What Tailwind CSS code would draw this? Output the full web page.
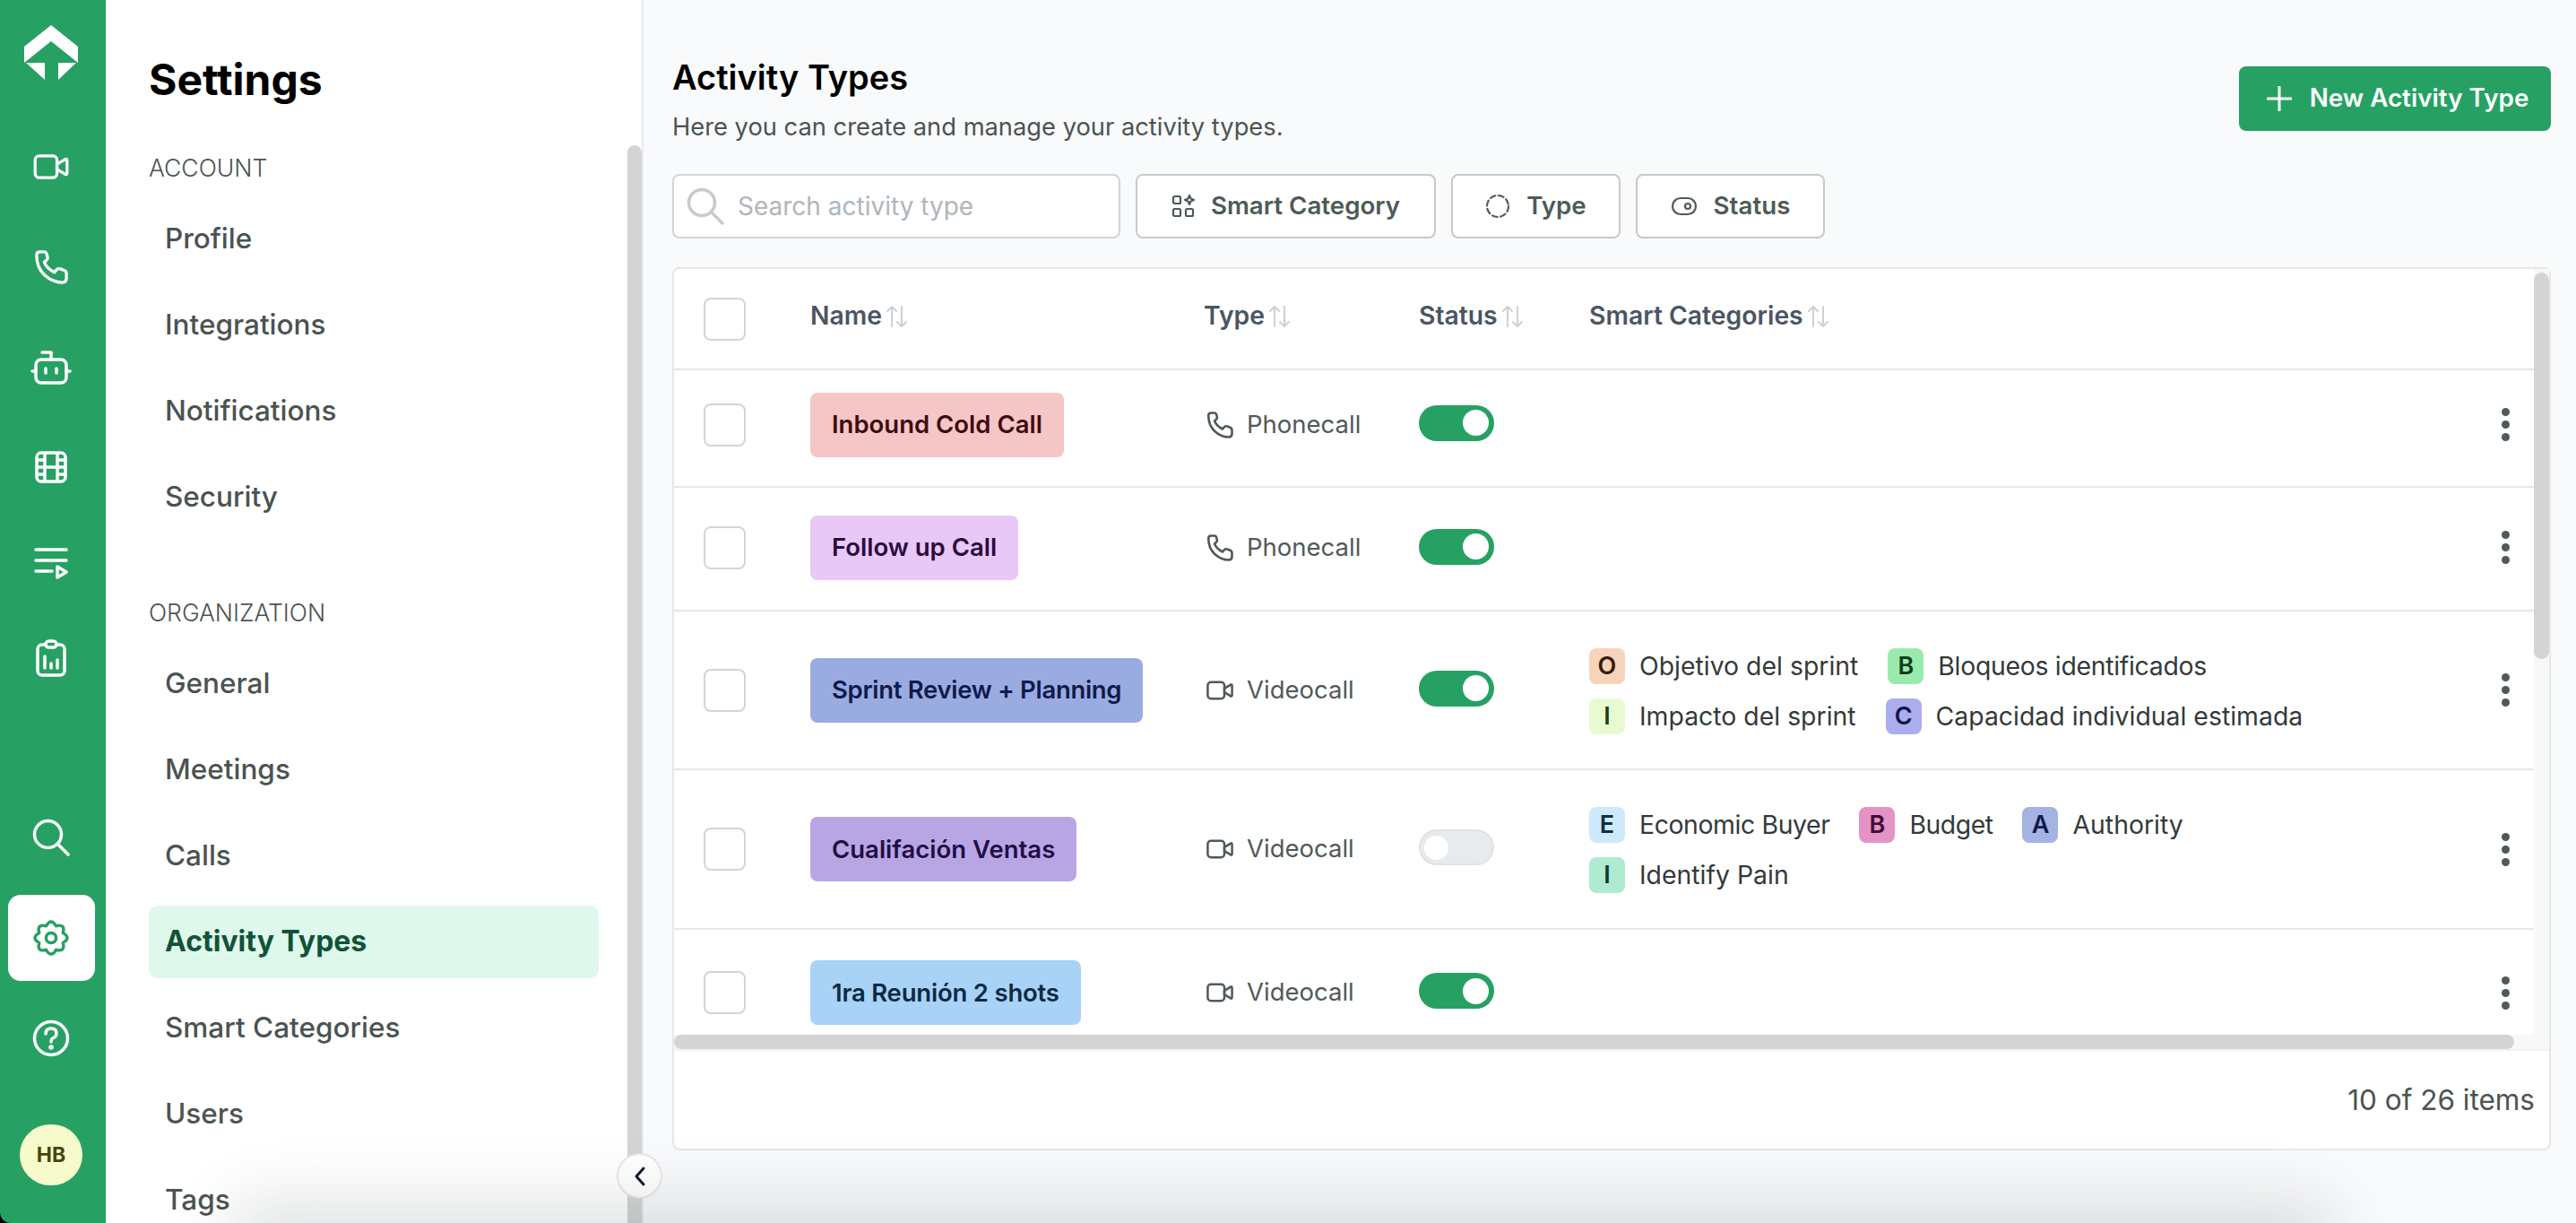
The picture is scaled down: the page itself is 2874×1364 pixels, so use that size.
<!DOCTYPE html>
<html lang="en">
<head>
  <meta charset="UTF-8"/>
  <title>Activity Types</title>
  <script src="https://cdn.jsdelivr.net/npm/@tailwindcss/browser@4"></script>
</head>
<body class="bg-[#f9fafb] font-['Inter',sans-serif] text-[#4b5563]">
<div class="relative flex h-[1364px] w-[2874px] overflow-hidden bg-black">

  <!-- Icon rail -->
  <aside class="flex w-[118px] shrink-0 flex-col items-center rounded-bl-[12px] bg-[#26a163] pr-[4px] text-white">
    <div class="flex h-[130px] items-start pt-[28px]">
      <svg width="60" height="61" viewBox="0 0 60 61" fill="currentColor"><path d="M30 0 60 24V42L30 18 0 42V24Z"/><path d="M2 42H23V61ZM58 42H38V61Z"/></svg>
    </div>
    <div class="flex h-[112px] items-center">
      <svg width="40" height="30" viewBox="0 0 42 32" fill="none" stroke="currentColor" stroke-width="3.5" stroke-linejoin="round"><rect x="2" y="3" width="26" height="26" rx="5"/><path d="M28 13 38 7Q40 6 40 9V23Q40 26 38 25L28 19Z"/></svg>
    </div>
    <div class="flex h-[112px] items-center">
      <svg width="38" height="38" viewBox="0 0 40 40" fill="none" stroke="currentColor" stroke-width="3.5" stroke-linejoin="round"><path d="M3 6Q3 2 7 2H12Q14 2 15 5L16 9Q16 11 12 14C14 19 18 23 24 26 27 22 28 21 31 22L36 24Q38 25 38 28V33Q38 38 33 38 22 38 12 29 3 20 3 6Z"/></svg>
    </div>
    <div class="flex h-[112px] items-center">
      <svg width="46" height="38" viewBox="0 0 46 38" fill="none" stroke="currentColor" stroke-width="3.5" stroke-linecap="round" stroke-linejoin="round"><rect x="6" y="10" width="34" height="26" rx="6"/><path d="M13 2H23V10M2 23H6M40 23H44M17 20V25M29 20V25"/></svg>
    </div>
    <div class="flex h-[110px] items-center">
      <svg width="36" height="36" viewBox="0 0 36 36" fill="none" stroke="currentColor" stroke-width="3.5"><rect x="2" y="2" width="32" height="32" rx="5"/><path d="M11 2V34M25 2V34M11 18H25M2 10H11M2 18H11M2 26H11M25 10H34M25 18H34M25 26H34"/></svg>
    </div>
    <div class="flex h-[104px] items-center">
      <svg width="38" height="36" viewBox="0 0 38 36" fill="none" stroke="currentColor" stroke-width="3.5" stroke-linecap="round" stroke-linejoin="round"><path d="M2 3H36M2 15H36M2 27H20M26 22 36 28 26 34Z"/></svg>
    </div>
    <div class="flex h-[108px] items-center">
      <svg width="34" height="42" viewBox="0 0 34 42" fill="none" stroke="currentColor" stroke-width="3.5" stroke-linecap="round" stroke-linejoin="round"><rect x="2" y="6" width="30" height="34" rx="5"/><rect x="11" y="2" width="12" height="7" rx="3.5" fill="#26a163"/><path d="M10 19V32M17 27V32M24 23V32"/></svg>
    </div>

    <div class="mt-auto flex h-[112px] items-center pb-[16px]">
      <svg width="42" height="42" viewBox="0 0 42 42" fill="none" stroke="currentColor" stroke-width="3.5" stroke-linecap="round"><circle cx="17.5" cy="17.5" r="15"/><path d="M28 28 40 40"/></svg>
    </div>
    <div class="flex h-[96px] w-[97px] items-center justify-center rounded-[14px] bg-white text-[#26a163]">
      <svg width="42" height="42" viewBox="0 0 24 24" fill="none" stroke="currentColor" stroke-width="2" stroke-linejoin="round"><circle cx="12" cy="12" r="3.2"/><path d="M19.58 8.86Q25 12 19.58 15.14 21.19 21.19 15.14 19.58 12 25 8.86 19.58 2.81 21.19 4.42 15.14-1 12 4.42 8.86 2.81 2.81 8.86 4.42 12-1 15.14 4.42 21.19 2.81 19.58 8.86Z"/></svg>
    </div>
    <div class="flex h-[128px] items-center">
      <svg width="42" height="42" viewBox="0 0 42 42" fill="none" stroke="currentColor" stroke-width="3.5" stroke-linecap="round"><circle cx="21" cy="21" r="18.5"/><path d="M15 16Q15 10 21 10 27 10 27 15.5 27 19 23.5 20.5 21 21.5 21 25"/><circle cx="21" cy="31" r="1" fill="currentColor"/></svg>
    </div>
    <div class="mt-[32px] mb-[42px] flex h-[68px] w-[70px] items-center justify-center rounded-full bg-[#f7fbcb] text-[23px] font-bold text-[#45460f]">HB</div>
  </aside>

  <!-- Settings menu -->
  <nav class="w-[600px] shrink-0 border-r-2 border-[#e8eaed] bg-white pl-[48px] text-[#4b5352]">
    <h1 class="pt-[59px] text-[48px] leading-[60px] font-bold text-black">Settings</h1>
    <p class="mt-[53px] text-[26.5px] leading-[30px] font-light">ACCOUNT</p>
    <ul class="mt-[24px] w-[502px] text-[31.5px] font-medium">
      <li class="mb-[15px] flex h-[81px] items-center pb-[2px] pl-[18px]">Profile</li>
      <li class="mb-[15px] flex h-[81px] items-center pb-[2px] pl-[18px]">Integrations</li>
      <li class="mb-[15px] flex h-[81px] items-center pb-[2px] pl-[18px]">Notifications</li>
      <li class="flex h-[81px] items-center pb-[2px] pl-[18px]">Security</li>
    </ul>
    <p class="mt-[73px] text-[26.5px] leading-[30px] font-light">ORGANIZATION</p>
    <ul class="mt-[24px] w-[502px] text-[31.5px] font-medium">
      <li class="mb-[15px] flex h-[81px] items-center pb-[2px] pl-[18px]">General</li>
      <li class="mb-[15px] flex h-[81px] items-center pb-[2px] pl-[18px]">Meetings</li>
      <li class="mb-[15px] flex h-[81px] items-center pb-[2px] pl-[18px]">Calls</li>
      <li class="mb-[15px] flex h-[81px] items-center rounded-[10px] bg-[#def9eb] pb-[2px] pl-[18px] text-[32px] font-bold text-[#125238]">Activity Types</li>
      <li class="mb-[15px] flex h-[81px] items-center pb-[2px] pl-[18px]">Smart Categories</li>
      <li class="mb-[15px] flex h-[81px] items-center pb-[2px] pl-[18px]">Users</li>
      <li class="flex h-[81px] items-center pb-[2px] pl-[18px]">Tags</li>
    </ul>
  </nav>

  <!-- Main content -->
  <main class="flex min-w-0 flex-1 flex-col bg-[#f9fafb] pt-[64px] pr-[28px] pl-[32px]">
    <header class="flex items-start justify-between">
      <div>
        <h2 class="text-[38px] leading-[44px] font-semibold text-black">Activity Types</h2>
        <p class="mt-[14px] text-[27.3px] leading-[40px] text-[#4b5352]">Here you can create and manage your activity types.</p>
      </div>
      <button class="mt-[10px] flex h-[72px] w-[348px] items-center justify-center gap-[20px] rounded-[8px] bg-[#26a163] pl-[6px] text-[27.8px] font-semibold text-white">
        <svg width="28" height="28" viewBox="0 0 28 28" fill="none" stroke="currentColor" stroke-width="3" stroke-linecap="round"><path d="M14 1V27M1 14H27"/></svg>
        New Activity Type
      </button>
    </header>

    <div class="mt-[32px] flex gap-[17px]">
      <label class="flex h-[72px] w-[500px] items-center gap-[15px] rounded-[8px] border-2 border-[#d1d5db] bg-white pl-[14px]">
        <svg width="42" height="42" viewBox="0 0 42 42" fill="none" stroke="#c5ccc9" stroke-width="3.5" stroke-linecap="round"><circle cx="17" cy="17" r="14.5"/><path d="M28 28 40 40"/></svg>
        <span class="text-[28px] text-[#aeb6bd]">Search activity type</span>
      </label>
      <button class="flex h-[72px] w-[335px] items-center justify-center gap-[18px] rounded-[8px] border-2 border-[#c6cac9] bg-white text-[27.7px] font-semibold text-[#4f5a58]">
        <svg width="26" height="26" viewBox="0 0 26 26" fill="none" stroke="currentColor" stroke-width="2.2" stroke-linejoin="round"><rect x="2" y="2" width="8" height="8" rx="1.5"/><rect x="2" y="16" width="8" height="8" rx="1.5"/><rect x="16" y="16" width="8" height="8" rx="1.5"/><path d="M20 1 21.5 4.5 25 6 21.5 7.5 20 11 18.5 7.5 15 6 18.5 4.5Z"/></svg>
        Smart Category
      </button>
      <button class="flex h-[72px] w-[189px] items-center justify-center gap-[18px] rounded-[8px] border-2 border-[#c6cac9] bg-white text-[27.7px] font-semibold text-[#4f5a58]">
        <svg width="28" height="28" viewBox="0 0 28 28" fill="none" stroke="currentColor" stroke-width="2.2" stroke-dasharray="6 3.5" stroke-linecap="round"><circle cx="14" cy="14" r="12"/></svg>
        Type
      </button>
      <button class="flex h-[72px] w-[211px] items-center justify-center gap-[18px] rounded-[8px] border-2 border-[#c6cac9] bg-white text-[27.7px] font-semibold text-[#4f5a58]">
        <svg width="30" height="24" viewBox="0 0 30 24" fill="none" stroke="currentColor" stroke-width="2.2"><rect x="2" y="3" width="26" height="18" rx="9"/><circle cx="19" cy="12" r="3"/></svg>
        Status
      </button>
    </div>

    <section class="mt-[32px] flex h-[985px] flex-col rounded-[8px] border-2 border-[#e5e7eb] bg-white">
      <div class="flex h-[854px] shrink-0 overflow-hidden">
        <div class="min-w-0 flex-1 overflow-hidden">
          <!-- Head row -->
          <div class="flex h-[113px] items-center border-b-2 border-[#e5e7eb] text-[28.3px] font-semibold text-[#4b5563]">
            <span class="ml-[33px] h-[48px] w-[47px] rounded-[8px] border-2 border-[#d1d5db]"></span>
            <span class="mb-[6px] ml-[72px] flex w-[439px] items-center gap-[2px]">Name
              <svg width="28" height="28" viewBox="0 0 28 28" fill="none" stroke="#cdd1d5" stroke-width="2" stroke-linecap="round" stroke-linejoin="round"><path d="M9 25V3M4 8 9 3 14 8M20 3V25M15 20 20 25 25 20"/></svg>
            </span>
            <span class="mb-[6px] flex w-[240px] items-center gap-[2px]">Type
              <svg width="28" height="28" viewBox="0 0 28 28" fill="none" stroke="#cdd1d5" stroke-width="2" stroke-linecap="round" stroke-linejoin="round"><path d="M9 25V3M4 8 9 3 14 8M20 3V25M15 20 20 25 25 20"/></svg>
            </span>
            <span class="mb-[6px] flex w-[190px] items-center gap-[2px]">Status
              <svg width="28" height="28" viewBox="0 0 28 28" fill="none" stroke="#cdd1d5" stroke-width="2" stroke-linecap="round" stroke-linejoin="round"><path d="M9 25V3M4 8 9 3 14 8M20 3V25M15 20 20 25 25 20"/></svg>
            </span>
            <span class="mb-[6px] flex items-center gap-[2px]">Smart Categories
              <svg width="28" height="28" viewBox="0 0 28 28" fill="none" stroke="#cdd1d5" stroke-width="2" stroke-linecap="round" stroke-linejoin="round"><path d="M9 25V3M4 8 9 3 14 8M20 3V25M15 20 20 25 25 20"/></svg>
            </span>
          </div>

          <!-- Row 1 -->
          <div class="flex h-[131px] items-center border-b-2 border-[#e5e7eb] pb-[8px]">
            <span class="ml-[33px] h-[48px] w-[47px] rounded-[8px] border-2 border-[#d1d5db]"></span>
            <span class="ml-[72px] w-[439px]"><span class="inline-flex h-[72px] items-center rounded-[8px] bg-[#f5c6c6] px-[24px] pt-[1px] text-[27.5px] font-semibold text-[#3f0b10]">Inbound Cold Call</span></span>
            <span class="flex w-[240px] items-center gap-[15px] pl-[3px] text-[27.5px] text-[#4f5a58]">
              <svg width="30" height="30" viewBox="0 0 40 40" fill="none" stroke="currentColor" stroke-width="3.5" stroke-linejoin="round"><path d="M3 6Q3 2 7 2H12Q14 2 15 5L16 9Q16 11 12 14C14 19 18 23 24 26 27 22 28 21 31 22L36 24Q38 25 38 28V33Q38 38 33 38 22 38 12 29 3 20 3 6Z"/></svg>
              Phonecall
            </span>
            <span class="mb-[4px] flex w-[190px]"><span class="flex h-[40px] w-[84px] items-center justify-end rounded-full bg-[#26a163] pr-[6px]"><span class="h-[29px] w-[29px] rounded-full bg-white"></span></span></span>
            <span class="mr-[27px] ml-auto flex flex-col gap-[5px]"><i class="h-[9px] w-[9px] rounded-full bg-[#4f5a58]"></i><i class="h-[9px] w-[9px] rounded-full bg-[#4f5a58]"></i><i class="h-[9px] w-[9px] rounded-full bg-[#4f5a58]"></i></span>
          </div>

          <!-- Row 2 -->
          <div class="flex h-[138px] items-center border-b-2 border-[#e5e7eb] pb-[3px]">
            <span class="ml-[33px] h-[48px] w-[47px] rounded-[8px] border-2 border-[#d1d5db]"></span>
            <span class="ml-[72px] w-[439px]"><span class="inline-flex h-[72px] items-center rounded-[8px] bg-[#e8c8f6] px-[24px] pt-[1px] text-[27.5px] font-semibold text-[#2a0b3d]">Follow up Call</span></span>
            <span class="flex w-[240px] items-center gap-[15px] pl-[3px] text-[27.5px] text-[#4f5a58]">
              <svg width="30" height="30" viewBox="0 0 40 40" fill="none" stroke="currentColor" stroke-width="3.5" stroke-linejoin="round"><path d="M3 6Q3 2 7 2H12Q14 2 15 5L16 9Q16 11 12 14C14 19 18 23 24 26 27 22 28 21 31 22L36 24Q38 25 38 28V33Q38 38 33 38 22 38 12 29 3 20 3 6Z"/></svg>
              Phonecall
            </span>
            <span class="mb-[2px] flex w-[190px]"><span class="flex h-[40px] w-[84px] items-center justify-end rounded-full bg-[#26a163] pr-[6px]"><span class="h-[29px] w-[29px] rounded-full bg-white"></span></span></span>
            <span class="mr-[27px] ml-auto flex flex-col gap-[5px]"><i class="h-[9px] w-[9px] rounded-full bg-[#4f5a58]"></i><i class="h-[9px] w-[9px] rounded-full bg-[#4f5a58]"></i><i class="h-[9px] w-[9px] rounded-full bg-[#4f5a58]"></i></span>
          </div>

          <!-- Row 3 -->
          <div class="flex h-[177px] items-center border-b-2 border-[#e5e7eb]">
            <span class="ml-[33px] h-[48px] w-[47px] rounded-[8px] border-2 border-[#d1d5db]"></span>
            <span class="ml-[72px] w-[439px]"><span class="inline-flex h-[72px] items-center rounded-[8px] bg-[#9aabe2] px-[24px] pt-[1px] text-[27.5px] font-semibold tracking-[-0.3px] text-[#111a4a]">Sprint Review + Planning</span></span>
            <span class="flex w-[240px] items-center gap-[15px] pl-[3px] text-[27.5px] text-[#4f5a58]">
              <svg width="30" height="28" viewBox="0 0 42 32" fill="none" stroke="currentColor" stroke-width="3.5" stroke-linejoin="round"><rect x="2" y="3" width="26" height="26" rx="5"/><path d="M28 13 38 7Q40 6 40 9V23Q40 26 38 25L28 19Z"/></svg>
              Videocall
            </span>
            <span class="mb-[4px] flex w-[190px]"><span class="flex h-[40px] w-[84px] items-center justify-end rounded-full bg-[#26a163] pr-[6px]"><span class="h-[29px] w-[29px] rounded-full bg-white"></span></span></span>
            <div class="flex flex-col gap-[16px] pt-[2px] text-[28.4px] leading-[40px] text-[#333a39]">
              <div class="flex items-center">
                <b class="flex h-[40px] w-[40px] items-center justify-center rounded-[8px] bg-[#f5d4bb] text-[27px] font-semibold text-[#3a1a05]">O</b><span class="ml-[16px]">Objetivo del sprint</span>
                <b class="ml-[33px] flex h-[40px] w-[40px] items-center justify-center rounded-[8px] bg-[#9aeaae] text-[27px] font-semibold text-[#0f3d1e]">B</b><span class="ml-[16px] tracking-[-0.3px]">Bloqueos identificados</span>
              </div>
              <div class="flex items-center">
                <b class="flex h-[40px] w-[40px] items-center justify-center rounded-[8px] bg-[#e8fbd0] text-[27px] font-semibold text-[#1f3d0f]">I</b><span class="ml-[16px]">Impacto del sprint</span>
                <b class="ml-[33px] flex h-[40px] w-[40px] items-center justify-center rounded-[8px] bg-[#aaaeee] text-[27px] font-semibold text-[#14124a]">C</b><span class="ml-[16px]">Capacidad individual estimada</span>
              </div>
            </div>
            <span class="mr-[27px] ml-auto flex flex-col gap-[5px]"><i class="h-[9px] w-[9px] rounded-full bg-[#4f5a58]"></i><i class="h-[9px] w-[9px] rounded-full bg-[#4f5a58]"></i><i class="h-[9px] w-[9px] rounded-full bg-[#4f5a58]"></i></span>
          </div>

          <!-- Row 4 -->
          <div class="flex h-[178px] items-center border-b-2 border-[#e5e7eb]">
            <span class="ml-[33px] h-[48px] w-[47px] rounded-[8px] border-2 border-[#d1d5db]"></span>
            <span class="ml-[72px] w-[439px]"><span class="inline-flex h-[72px] items-center rounded-[8px] bg-[#b8a6e4] px-[24px] pt-[1px] text-[27.5px] font-semibold text-[#1f0f45]">Cualifación Ventas</span></span>
            <span class="flex w-[240px] items-center gap-[15px] pl-[3px] text-[27.5px] text-[#4f5a58]">
              <svg width="30" height="28" viewBox="0 0 42 32" fill="none" stroke="currentColor" stroke-width="3.5" stroke-linejoin="round"><rect x="2" y="3" width="26" height="26" rx="5"/><path d="M28 13 38 7Q40 6 40 9V23Q40 26 38 25L28 19Z"/></svg>
              Videocall
            </span>
            <span class="mb-[4px] flex w-[190px]"><span class="flex h-[40px] w-[84px] items-center rounded-full border-2 border-[#dfe3e7] bg-[#e8ebee] pl-[4px]"><span class="h-[27px] w-[27px] rounded-full bg-white"></span></span></span>
            <div class="flex flex-col gap-[16px] pt-[2px] text-[28.4px] leading-[40px] text-[#333a39]">
              <div class="flex items-center">
                <b class="flex h-[40px] w-[40px] items-center justify-center rounded-[8px] bg-[#cfe9fc] text-[27px] font-semibold text-[#0c2f47]">E</b><span class="ml-[16px] tracking-[-0.4px]">Economic Buyer</span>
                <b class="ml-[33px] flex h-[40px] w-[40px] items-center justify-center rounded-[8px] bg-[#e393c6] text-[27px] font-semibold text-[#45083a]">B</b><span class="ml-[16px] tracking-[-0.5px]">Budget</span>
                <b class="ml-[33px] flex h-[40px] w-[40px] items-center justify-center rounded-[8px] bg-[#a3b3e3] text-[27px] font-semibold text-[#101a4f]">A</b><span class="ml-[16px]">Authority</span>
              </div>
              <div class="flex items-center">
                <b class="flex h-[40px] w-[40px] items-center justify-center rounded-[8px] bg-[#aeebd0] text-[27px] font-semibold text-[#0c3a28]">I</b><span class="ml-[16px]">Identify Pain</span>
              </div>
            </div>
            <span class="mr-[27px] ml-auto flex flex-col gap-[5px]"><i class="h-[9px] w-[9px] rounded-full bg-[#4f5a58]"></i><i class="h-[9px] w-[9px] rounded-full bg-[#4f5a58]"></i><i class="h-[9px] w-[9px] rounded-full bg-[#4f5a58]"></i></span>
          </div>

          <!-- Row 5, cut off by the scroll area -->
          <div class="flex h-[140px] items-center">
            <span class="ml-[33px] h-[48px] w-[47px] rounded-[8px] border-2 border-[#d1d5db]"></span>
            <span class="ml-[72px] w-[439px]"><span class="inline-flex h-[72px] items-center rounded-[8px] bg-[#a8d3f6] px-[24px] pt-[1px] text-[27.5px] font-semibold tracking-[-0.2px] text-[#0c2a44]">1ra Reunión 2 shots</span></span>
            <span class="flex w-[240px] items-center gap-[15px] pl-[3px] text-[27.5px] text-[#4f5a58]">
              <svg width="30" height="28" viewBox="0 0 42 32" fill="none" stroke="currentColor" stroke-width="3.5" stroke-linejoin="round"><rect x="2" y="3" width="26" height="26" rx="5"/><path d="M28 13 38 7Q40 6 40 9V23Q40 26 38 25L28 19Z"/></svg>
              Videocall
            </span>
            <span class="mb-[4px] flex w-[190px]"><span class="flex h-[40px] w-[84px] items-center justify-end rounded-full bg-[#26a163] pr-[6px]"><span class="h-[29px] w-[29px] rounded-full bg-white"></span></span></span>
            <span class="mr-[27px] ml-auto flex flex-col gap-[5px]"><i class="h-[9px] w-[9px] rounded-full bg-[#4f5a58]"></i><i class="h-[9px] w-[9px] rounded-full bg-[#4f5a58]"></i><i class="h-[9px] w-[9px] rounded-full bg-[#4f5a58]"></i></span>
          </div>
        </div>
        <!-- Vertical scrollbar -->
        <div class="w-[17px] shrink-0 bg-[#f7f8f8] pt-[4px]">
          <div class="h-[431px] rounded-full bg-[#d4d4d4]"></div>
        </div>
      </div>
      <!-- Horizontal scrollbar -->
      <div class="flex h-[16px] shrink-0 bg-[#f7f8f8]">
        <div class="w-[2053px] rounded-full bg-[#d4d4d4]"></div>
      </div>
      <div class="flex flex-1 items-center justify-end border-t-2 border-[#f0f1f3] pr-[16px] text-[31.5px] text-[#4b5352]">10 of 26 items</div>
    </section>
  </main>

  <!-- Settings menu scrollbar -->
  <div class="absolute top-[162px] left-[700px] h-[1202px] w-[16px] rounded-t-full bg-[#d4d4d4]"></div>

  <!-- Collapse button -->
  <button class="absolute top-[1286px] left-[688px] flex h-[51px] w-[51px] items-center justify-center rounded-full border-2 border-[#e5e7eb] bg-white text-[#111827]">
    <svg width="14" height="24" viewBox="0 0 14 24" fill="none" stroke="currentColor" stroke-width="3" stroke-linecap="round" stroke-linejoin="round"><path d="M11 3 3 12 11 21"/></svg>
  </button>

  <!-- Soft shadow along the bottom edge -->
  <div class="pointer-events-none absolute bottom-[-40px] left-[280px] h-[40px] w-[2300px] rounded-full shadow-[0_0_70px_30px_rgba(60,70,80,0.14)]"></div>
</div>
</body>
</html>
